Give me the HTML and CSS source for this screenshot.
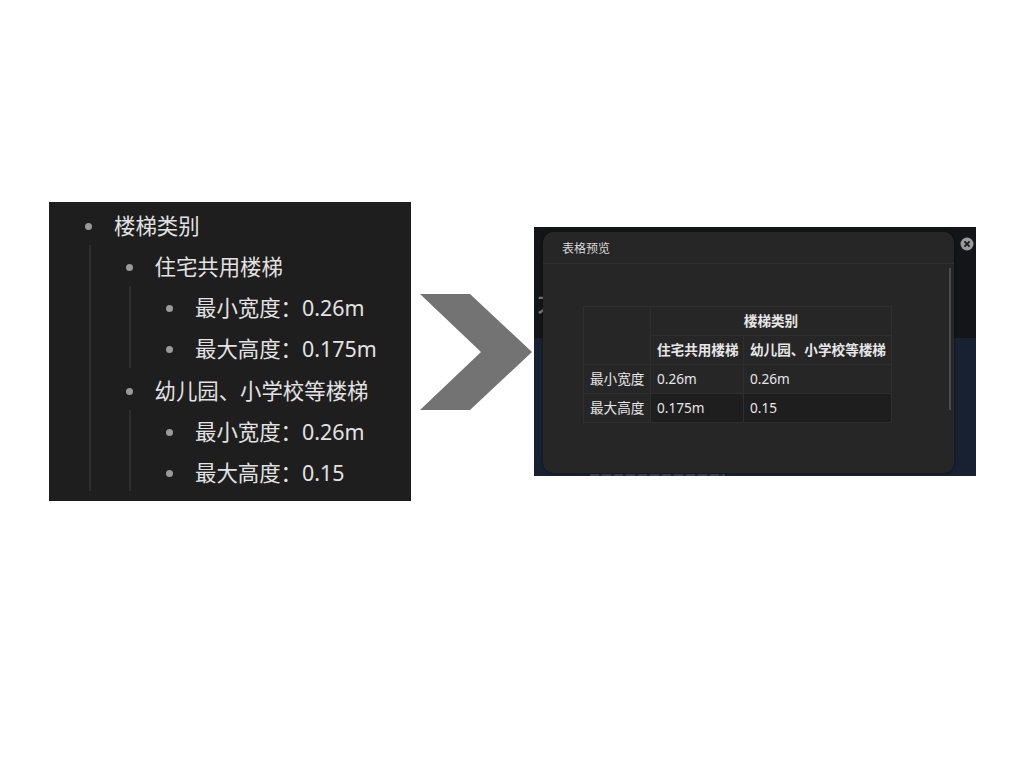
FILE: index.html
```html
<!DOCTYPE html>
<html lang="zh">
<head>
  <meta charset="UTF-8">
  <title>楼梯类别</title>
  <link rel="stylesheet" href="styles.css">
</head>
<body>
  <div class="slide">

    <div class="outline">
      <ul class="tree">
        <li>
          <div class="node">楼梯类别</div>
          <ul class="tree">
            <li>
              <div class="node">住宅共用楼梯</div>
              <ul class="tree">
                <li><div class="node">最小宽度：0.26m</div></li>
                <li><div class="node">最大高度：0.175m</div></li>
              </ul>
            </li>
            <li>
              <div class="node">幼儿园、小学校等楼梯</div>
              <ul class="tree">
                <li><div class="node">最小宽度：0.26m</div></li>
                <li><div class="node">最大高度：0.15</div></li>
              </ul>
            </li>
          </ul>
        </li>
      </ul>
    </div>

    <svg class="arrow" width="114" height="116" viewBox="0 0 114 116">
      <polygon points="0,0 50,0 112,58 50,116 0,116 61,58" fill="#737373"/>
    </svg>

    <div class="shot">
      <div class="shot-top"></div>
      <div class="shot-bottom"></div>
      <span class="behind-title">才</span>
      <div class="behind-strip"></div>

      <div class="modal">
        <div class="modal-head">表格预览</div>
        <div class="modal-body">
          <table class="preview">
            <colgroup>
              <col class="col-label">
              <col class="col-first">
              <col class="col-second">
            </colgroup>
            <tr>
              <th rowspan="2"></th>
              <th colspan="2">楼梯类别</th>
            </tr>
            <tr>
              <th>住宅共用楼梯</th>
              <th>幼儿园、小学校等楼梯</th>
            </tr>
            <tr>
              <td class="label">最小宽度</td>
              <td>0.26m</td>
              <td>0.26m</td>
            </tr>
            <tr class="even">
              <td class="label">最大高度</td>
              <td>0.175m</td>
              <td>0.15</td>
            </tr>
          </table>
        </div>
        <div class="scrollbar"></div>
      </div>

      <svg class="close" width="14" height="14" viewBox="0 0 14 14">
        <circle cx="7" cy="7" r="6.5" fill="#9a9a9c"/>
        <path d="M4.4 4.4 9.6 9.6M9.6 4.4 4.4 9.6" stroke="#1a1a1c" stroke-width="1.8" fill="none"/>
      </svg>
    </div>

  </div>
</body>
</html>
```

FILE: styles.css
```css
html, body { margin: 0; padding: 0; background: #fff; }
body { font-family: "Noto Sans", "Noto Sans CJK SC", sans-serif; }

.slide { position: relative; width: 1024px; height: 768px; overflow: hidden; }

/* left picture: outline */
.outline { position: absolute; left: 49px; top: 202px; width: 362px; height: 299px; background: #1e1e1e; color: #e2e2e2; font-size: 21.4px; overflow: hidden; }
.outline > .tree { padding: 4px 0 0 25px; }
.tree { list-style: none; margin: 0; padding: 0 0 0 40.5px; position: relative; }
.tree .tree::before { content: ""; position: absolute; left: 15px; top: -2px; bottom: 3px; width: 1.5px; background: #2e2e2e; }
.tree .tree .tree::before { left: 14.5px; }
.node { position: relative; height: 41.17px; line-height: 40px; padding-left: 40px; white-space: nowrap; }
.node::before { content: ""; position: absolute; left: 11px; top: 17px; width: 7px; height: 7px; border-radius: 50%; background: #9a9a9a; }

.arrow { position: absolute; left: 420px; top: 294px; }

/* right picture: table preview dialog */
.shot { position: absolute; left: 534px; top: 227px; width: 442px; height: 249px; overflow: hidden; background: #141518; }
.shot-top { height: 111px; background: #141518; }
.shot-bottom { height: 138px; background: #182131; }
.behind-title { position: absolute; left: 3px; top: 58px; color: #777; font-size: 28px; line-height: 36px; font-family: "Noto Sans CJK SC", sans-serif; }
.behind-strip { position: absolute; left: 56px; bottom: 0; width: 135px; height: 2px; background: repeating-linear-gradient(90deg, #3c4250 0 9px, #222a38 9px 12px); }

.modal { position: absolute; left: 9px; top: 5px; width: 411px; height: 241px; background: #262626; border-radius: 10px; box-shadow: 0 0 3px rgba(0,0,0,.5); color: #e6e6e6; font-size: 13.6px; }
.modal-head { height: 31px; line-height: 33px; padding-left: 19px; border-bottom: 1px solid #2f2f2f; color: #d8d8d8; font-size: 12px; }
.modal-body { padding: 42px 0 0 40px; }
.scrollbar { position: absolute; right: 3px; top: 36px; width: 2px; height: 142px; background: #4a4a4a; }

.preview { border-collapse: collapse; table-layout: fixed; width: 308px; }
.col-label { width: 67px; }
.col-first { width: 93px; }
.col-second { width: 148px; }
.preview th, .preview td { box-sizing: border-box; height: 29px; padding: 0 6px 2px; border: 1px solid #2e2e2e; text-align: left; white-space: nowrap; font-weight: 400; }
.preview th { font-weight: 700; text-align: center; }
.preview td.label { text-align: center; }
.preview tr.even td { background: #1e1e1e; }
.preview tr.even td.label { background: #262626; }

.close { position: absolute; left: 426px; top: 10px; }
```
